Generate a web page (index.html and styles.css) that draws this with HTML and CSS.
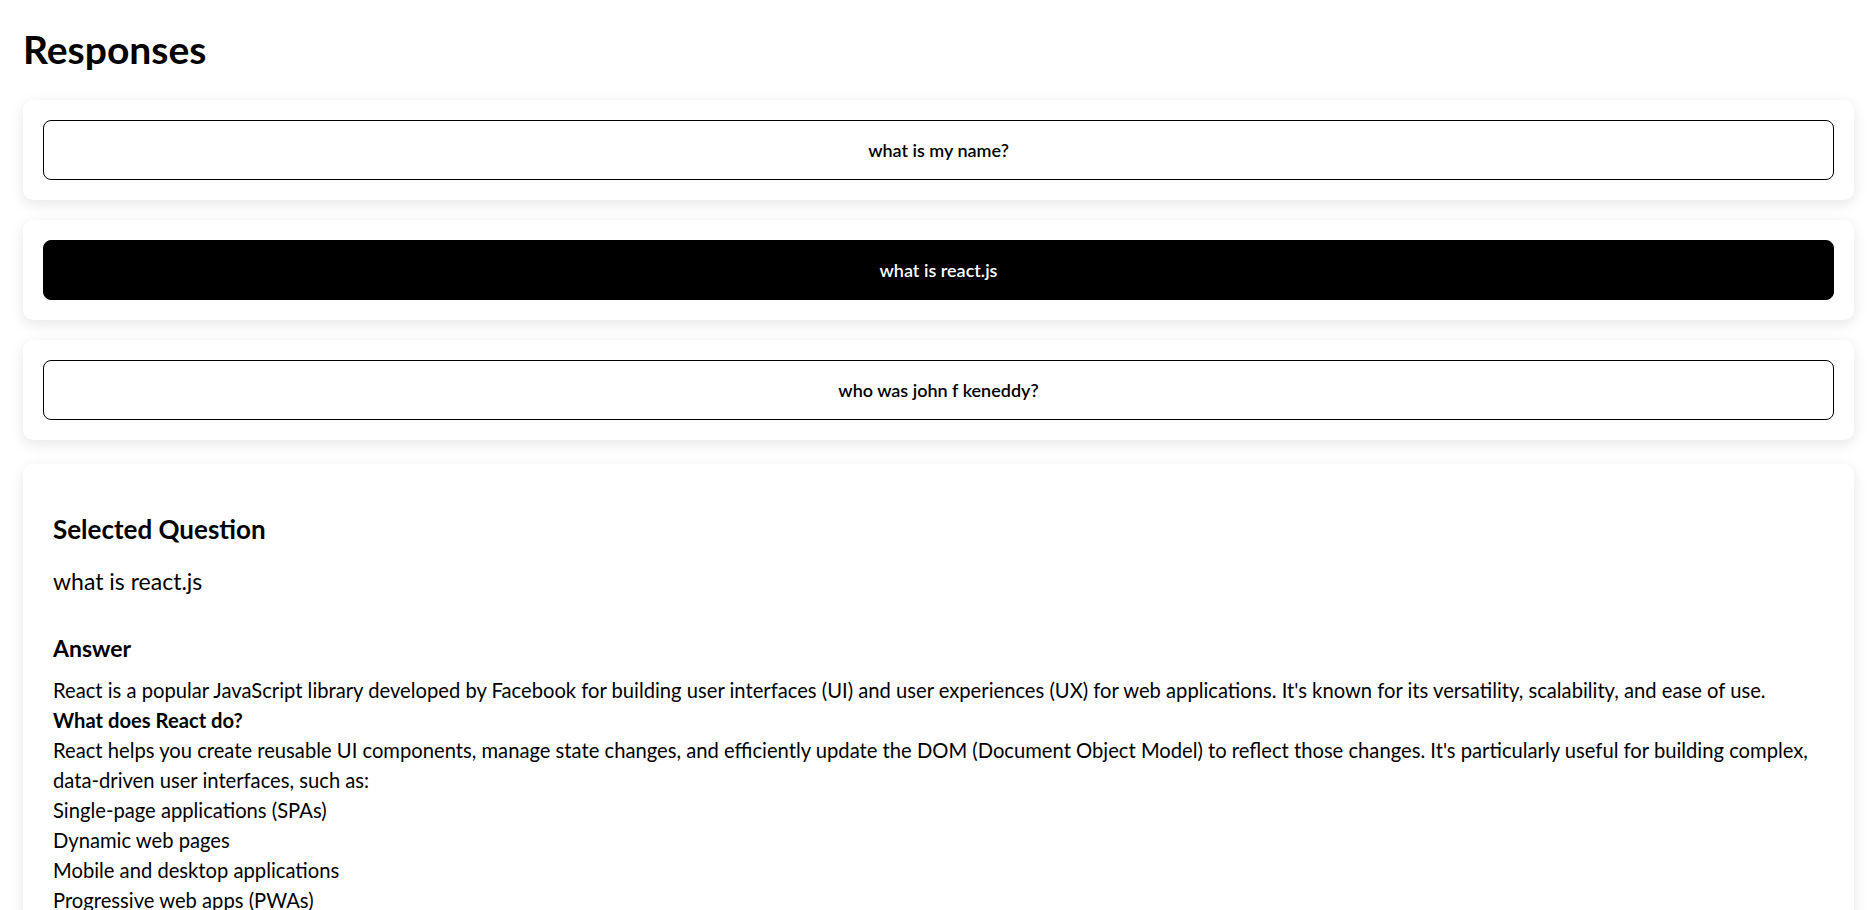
FILE: index.html
```html
<!DOCTYPE html>
<html lang="en">
<head>
<meta charset="utf-8">
<title>Responses</title>
<link rel="stylesheet" href="styles.css">
</head>
<body>
<div class="page">
  <h1 class="title">Responses</h1>
  <div class="list">
    <div class="card"><button class="q">what is my name?</button></div>
    <div class="card"><button class="q active">what is react.js</button></div>
    <div class="card"><button class="q">who was john f keneddy?</button></div>
  </div>
  <section class="detail">
    <h3 class="detail-title">Selected Question</h3>
    <p class="question">what is react.js</p>
    <h4 class="answer-title">Answer</h4>
    <div class="answer">
      <p>React is a popular JavaScript library developed by Facebook for building user interfaces (UI) and user experiences (UX) for web applications. It's known for its versatility, scalability, and ease of use.</p>
      <p class="strong">What does React do?</p>
      <p>React helps you create reusable UI components, manage state changes, and efficiently update the DOM (Document Object Model) to reflect those changes. It's particularly useful for building complex, data-driven user interfaces, such as:</p>
      <p>Single-page applications (SPAs)</p>
      <p>Dynamic web pages</p>
      <p>Mobile and desktop applications</p>
      <p>Progressive web apps (PWAs)</p>
    </div>
  </section>
</div>
</body>
</html>
```

FILE: styles.css
```css
html, body {
  margin: 0;
  padding: 0;
  background: #ffffff;
}

body {
  font-family: "Lato", "Liberation Sans", sans-serif;
  color: #000;
  font-size: 20.2px;
  line-height: 30px;
}

.page {
  padding: 25px 16px 0 23px;
}

.title {
  margin: 0 0 27px;
  font-size: 39px;
  line-height: 48px;
  font-weight: 700;
}

.list {
  display: flex;
  flex-direction: column;
  gap: 20px;
}

.card {
  background: #fff;
  border-radius: 10px;
  padding: 20px;
  box-shadow: 0 4px 14px rgba(0, 0, 0, 0.1);
}

.q {
  display: block;
  width: 100%;
  height: 60px;
  background: #fff;
  color: #000;
  border: 1px solid #000;
  border-radius: 8px;
  font-family: inherit;
  font-size: 18px;
  font-weight: 600;
  cursor: pointer;
}

.q.active {
  background: #000;
  color: #fff;
}

.detail {
  margin-top: 24px;
  background: #fff;
  border-radius: 10px;
  padding: 30px;
  box-shadow: 0 4px 14px rgba(0, 0, 0, 0.1);
}

.detail-title {
  margin: 20px 0 0;
  font-size: 26px;
  line-height: 30px;
  font-weight: 700;
}

.question {
  margin: 22px 0 0;
  font-size: 23px;
  line-height: 30px;
}

.answer-title {
  margin: 37px 0 0;
  font-size: 23px;
  line-height: 30px;
  font-weight: 700;
}

.answer {
  margin-top: 12px;
}

.answer p {
  margin: 0;
}

.answer .strong {
  font-weight: 700;
}
```
